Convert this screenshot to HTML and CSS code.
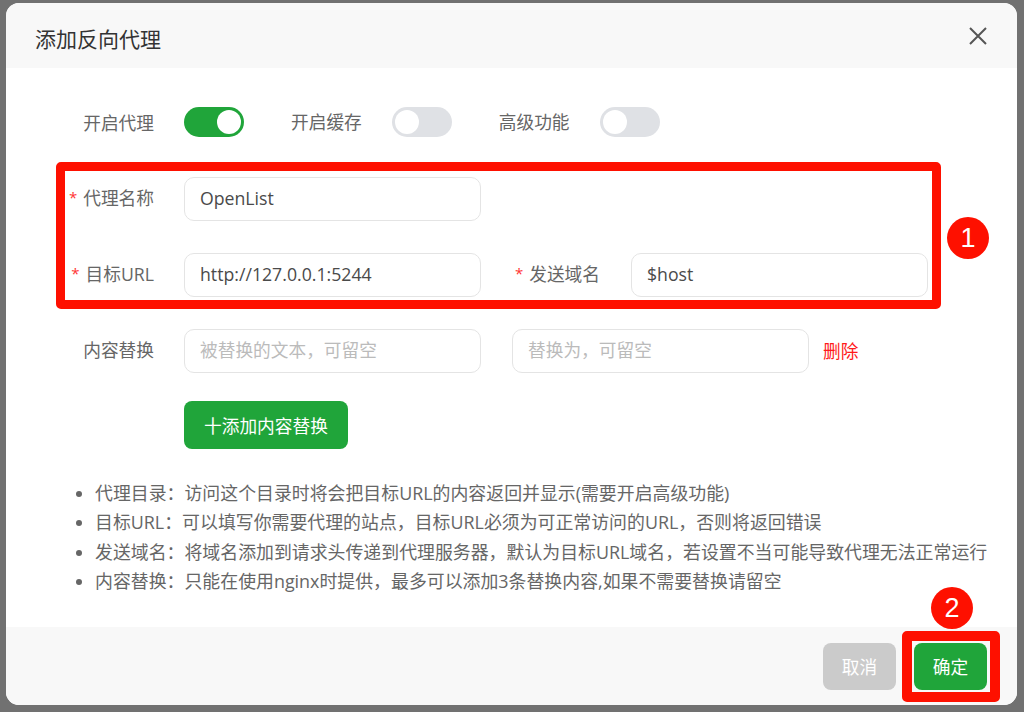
FILE: index.html
```html
<!DOCTYPE html>
<html lang="zh-CN">
<head>
    <meta charset="UTF-8">
    <meta name="viewport" content="width=device-width, initial-scale=1.0">
    <title>添加反向代理</title>
    <link rel="stylesheet" href="styles.css">
</head>
<body>
    <div class="dialog">
        <div class="dialog-head">
            <h2 class="dialog-title">添加反向代理</h2>
            <button class="close-btn" aria-label="关闭">
                <svg width="20" height="20" viewBox="0 0 20 20">
                    <path d="M2 2 L18 18 M18 2 L2 18" stroke="#555" stroke-width="2" fill="none"/>
                </svg>
            </button>
        </div>

        <div class="dialog-body">
            <div class="switch-row">
                <div class="switch-item">
                    <span class="form-label">开启代理</span>
                    <span class="switch on"></span>
                </div>
                <div class="switch-item">
                    <span class="switch-label">开启缓存</span>
                    <span class="switch"></span>
                </div>
                <div class="switch-item">
                    <span class="switch-label">高级功能</span>
                    <span class="switch"></span>
                </div>
            </div>

            <div class="form-row first">
                <label class="form-label"><span class="req">*</span>代理名称</label>
                <div class="input">OpenList</div>
            </div>

            <div class="form-row">
                <label class="form-label"><span class="req">*</span>目标URL</label>
                <div class="input">http://127.0.0.1:5244</div>
                <div class="field-group">
                    <label class="form-label"><span class="req">*</span>发送域名</label>
                    <div class="input">$host</div>
                </div>
            </div>

            <div class="form-row">
                <label class="form-label">内容替换</label>
                <div class="input placeholder">被替换的文本，可留空</div>
                <div class="input placeholder second">替换为，可留空</div>
                <span class="delete-link">删除</span>
            </div>

            <div class="add-row">
                <button class="btn-green add-btn">十添加内容替换</button>
            </div>

            <ul class="tips">
                <li>代理目录：访问这个目录时将会把目标URL的内容返回并显示(需要开启高级功能)</li>
                <li>目标URL：可以填写你需要代理的站点，目标URL必须为可正常访问的URL，否则将返回错误</li>
                <li>发送域名：将域名添加到请求头传递到代理服务器，默认为目标URL域名，若设置不当可能导致代理无法正常运行</li>
                <li>内容替换：只能在使用nginx时提供，最多可以添加3条替换内容,如果不需要替换请留空</li>
            </ul>
        </div>

        <div class="dialog-foot">
            <button class="btn-gray">取消</button>
            <button class="btn-green">确定</button>
        </div>

        <!-- marcas rojas -->
        <div class="mark mark-form"></div>
        <span class="badge badge-1">1</span>
        <div class="mark mark-ok"></div>
        <span class="badge badge-2">2</span>
    </div>
</body>
</html>
```

FILE: styles.css
```css
body {
    margin: 0;
    padding: 3px 7px 7px 6px;
    background-color: #717171;
    font-family: "Open Sans", "Noto Sans CJK SC", sans-serif;
    font-size: 17.7px;
    color: #666;
}

.dialog {
    position: relative;
    display: flex;
    flex-direction: column;
    width: 1011px;
    height: 702px;
    background-color: #fff;
    border-radius: 13px;
    overflow: hidden;
}

.dialog-head {
    display: flex;
    align-items: center;
    justify-content: space-between;
    height: 65px;
    padding: 0 29px 0 29px;
    background-color: #f8f8f8;
}

.dialog-title {
    margin: 0;
    font-size: 21px;
    font-weight: normal;
    color: #333;
    padding-top: 4px;
}

.close-btn {
    background: transparent;
    border: none;
    padding: 0;
    width: 20px;
    height: 20px;
    cursor: pointer;
}

.dialog-body {
    flex: 1;
    padding: 39px 0 0 48px;
}

.switch-row {
    display: flex;
    align-items: center;
    height: 30px;
}

.switch-item {
    display: flex;
    align-items: center;
    gap: 30px;
}

.switch-item + .switch-item {
    margin-left: 47px;
}

.switch-label {
    line-height: 30px;
}

.switch {
    position: relative;
    width: 60px;
    height: 30px;
    border-radius: 15px;
    background-color: #dfe1e5;
}

.switch::after {
    content: "";
    position: absolute;
    top: 3px;
    left: 3px;
    width: 24px;
    height: 24px;
    border-radius: 50%;
    background-color: #fff;
}

.switch.on {
    background-color: #20a53a;
}

.switch.on::after {
    left: 33px;
}

.form-label {
    width: 100px;
    text-align: right;
    white-space: nowrap;
}

.form-row .form-label {
    padding-bottom: 4px;
}

.req {
    color: #f33;
    font-size: 15px;
    margin-right: 6px;
    vertical-align: 2px;
}

.form-row {
    display: flex;
    align-items: center;
    gap: 30px;
    margin-top: 32px;
}

.form-row.first {
    margin-top: 40px;
}

.field-group {
    display: flex;
    align-items: center;
    gap: 31px;
    margin-left: -11px;
}

.input {
    box-sizing: border-box;
    width: 297px;
    height: 44px;
    line-height: 41px;
    padding: 0 15px;
    border: 1.5px solid #e4e4e4;
    border-radius: 10px;
    color: #4a4a4a;
    white-space: nowrap;
}

.input.placeholder {
    color: #bbb;
}

.input.second {
    margin-left: 1px;
}

.delete-link {
    margin-left: -16px;
    padding-bottom: 2px;
    color: #ff1a1a;
    cursor: pointer;
}

.add-row {
    padding-left: 130px;
    margin-top: 28px;
}

.btn-green,
.btn-gray {
    height: 47px;
    padding: 0 18px;
    border: none;
    border-radius: 8px;
    color: #fff;
    font-family: inherit;
    font-size: 17.7px;
    cursor: pointer;
}

.btn-green {
    background-color: #20a53a;
}

.btn-gray {
    background-color: #cbcbcb;
}

.add-btn {
    height: 48px;
    padding: 0 20px;
}

.tips {
    margin: 30px 0 0 0;
    padding-left: 41px;
    font-size: 17.9px;
    line-height: 29.4px;
    color: #666;
}

.dialog-foot {
    display: flex;
    align-items: center;
    justify-content: flex-end;
    gap: 18px;
    height: 78px;
    padding-right: 30px;
    background-color: #f8f8f8;
}

.dialog-foot button {
    width: 73px;
    padding: 0;
}

/* marcas rojas encima del dialogo */
.mark {
    position: absolute;
    box-sizing: border-box;
    border: 9px solid #fe1000;
    border-radius: 5px;
}

.mark-form {
    left: 50px;
    top: 159px;
    width: 885px;
    height: 147px;
}

.mark-ok {
    left: 896px;
    top: 628px;
    width: 98px;
    height: 71px;
    border-width: 10px;
}

.badge {
    position: absolute;
    width: 42px;
    height: 42px;
    border-radius: 50%;
    background-color: #fe1000;
    color: #fff;
    font-family: "Liberation Sans", Arial, sans-serif;
    font-size: 27px;
    line-height: 42px;
    text-align: center;
}

.badge-1 {
    left: 941px;
    top: 214px;
}

.badge-2 {
    left: 925px;
    top: 584px;
}
```
